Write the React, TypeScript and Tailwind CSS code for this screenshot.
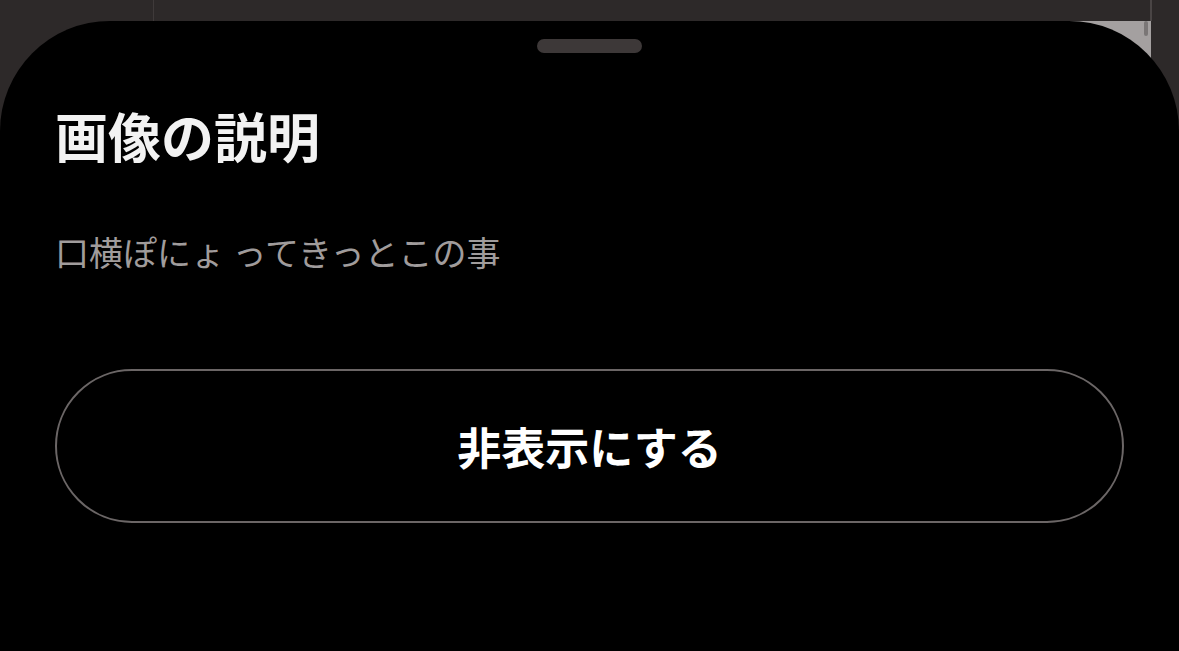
const jp = "font-['Noto_Sans_CJK_JP','Noto_Sans',sans-serif]";

// Page behind the sheet: only its top strip peeks out
function BackdropPage() {
  return (
    <div className="flex h-[70px] w-full flex-col">
      <div className="flex h-[21px] w-full">
        <div className="w-[153px]" />
        <div className="w-px bg-[#3f3a3a]" />
        <div className="flex-1" />
        <div className="w-[2px] bg-[#4a4545]" />
        <div className="w-[27px]" />
      </div>
      <div className="flex flex-1">
        <div className="flex-1" />
        <div className="relative w-[84px] bg-[#a4a0a0]">
          {/* scrollbar thumb */}
          <div className="absolute right-[3px] top-0 h-[15px] w-[4px] rounded-full bg-[#7a7676]" />
        </div>
        <div className="w-[28px]" />
      </div>
    </div>
  );
}

export default function App() {
  return (
    <div className={`relative h-[651px] w-[1179px] overflow-hidden bg-[#2d2929] ${jp}`}>
      <BackdropPage />

      {/* Bottom sheet */}
      <div className="absolute inset-x-0 bottom-0 top-[21px] flex flex-col rounded-t-[110px] bg-black px-[55px]">
        <div className="mt-[18px] flex justify-center">
          <div className="h-[14px] w-[105px] rounded-full bg-[#3d3838]" />
        </div>

        <h1 className="mt-[56px] text-[53px] font-bold leading-none text-[#f2f2f2]">画像の説明</h1>

        <p className="mt-[73px] text-[34px] leading-none text-[#a09c9c]">口横ぽにょ ってきっとこの事</p>

        <button className="mt-[100px] flex h-[154px] w-full items-center justify-center rounded-full border-2 border-[#6b6666] text-[44px] font-bold leading-none text-white">
          非表示にする
        </button>
      </div>
    </div>
  );
}
